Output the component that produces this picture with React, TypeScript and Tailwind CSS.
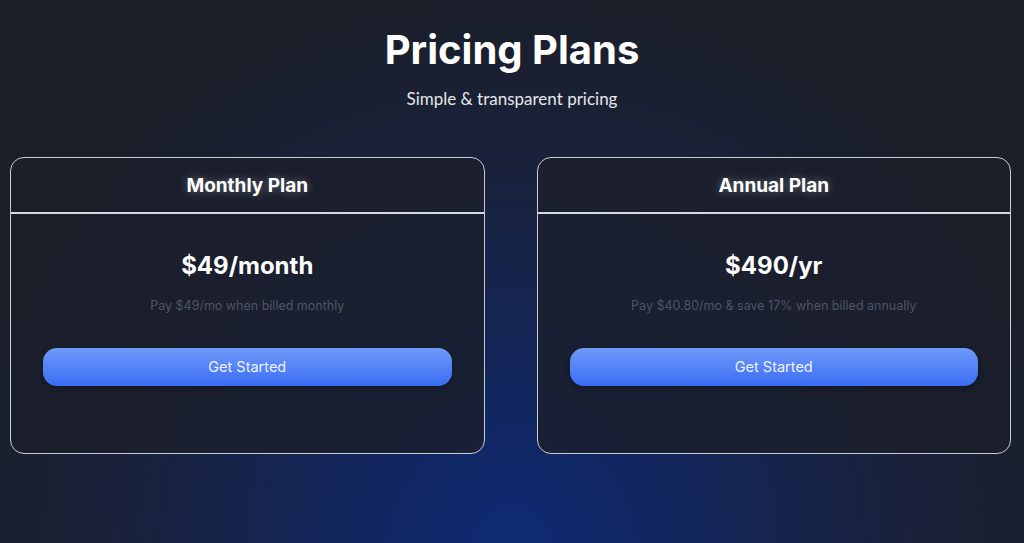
import React from "react";

interface PlanProps {
  name: string;
  price: string;
  note: string;
}

function PlanCard({ name, price, note }: PlanProps) {
  return (
    <div className="flex flex-col rounded-[14px] border border-[#c9ccd4] bg-[#1b1f2a]/80">
      <div className="flex h-[56px] items-center justify-center border-b-2 border-[#d5d8de] pt-[3px]">
        <h2 className="text-[19px] font-bold text-white [text-shadow:0_0_10px_rgba(255,255,255,0.35)]">{name}</h2>
      </div>
      <div className="flex flex-col items-center px-8 pt-9 pb-[67px]">
        <p className="text-[24px] font-bold leading-8 text-white">{price}</p>
        <p className="mt-[14px] text-[12.5px] leading-5 text-[#4d5464]">{note}</p>
        <button className="mt-8 h-[38px] w-full rounded-[14px] bg-gradient-to-b from-[#7099f8] to-[#3a6cf4] text-[14.5px] text-[#eef2ff] shadow-[0_2px_6px_rgba(0,0,0,0.35)]">
          Get Started
        </button>
      </div>
    </div>
  );
}

export default function App() {
  return (
    <div className="min-h-[543px] w-full bg-[#1b1f2a] bg-[radial-gradient(ellipse_55%_100%_at_50%_100%,#0f2a74_0%,#12265c_30%,#19223e_65%,#1b1f2a_100%)] font-['Inter',sans-serif]">
      <div className="flex flex-col items-center pt-[26px]">
        <h1 className="text-[40px] font-bold leading-[48px] text-white">Pricing Plans</h1>
        <p className="mt-[12px] font-['Lato',sans-serif] text-[17px] text-[#e5e7eb]">Simple &amp; transparent pricing</p>
      </div>
      <div className="mt-[45px] grid grid-cols-2 gap-[52px] pl-[10px] pr-[13px]">
        <PlanCard name="Monthly Plan" price="$49/month" note="Pay $49/mo when billed monthly" />
        <PlanCard name="Annual Plan" price="$490/yr" note="Pay $40.80/mo & save 17% when billed annually" />
      </div>
    </div>
  );
}
